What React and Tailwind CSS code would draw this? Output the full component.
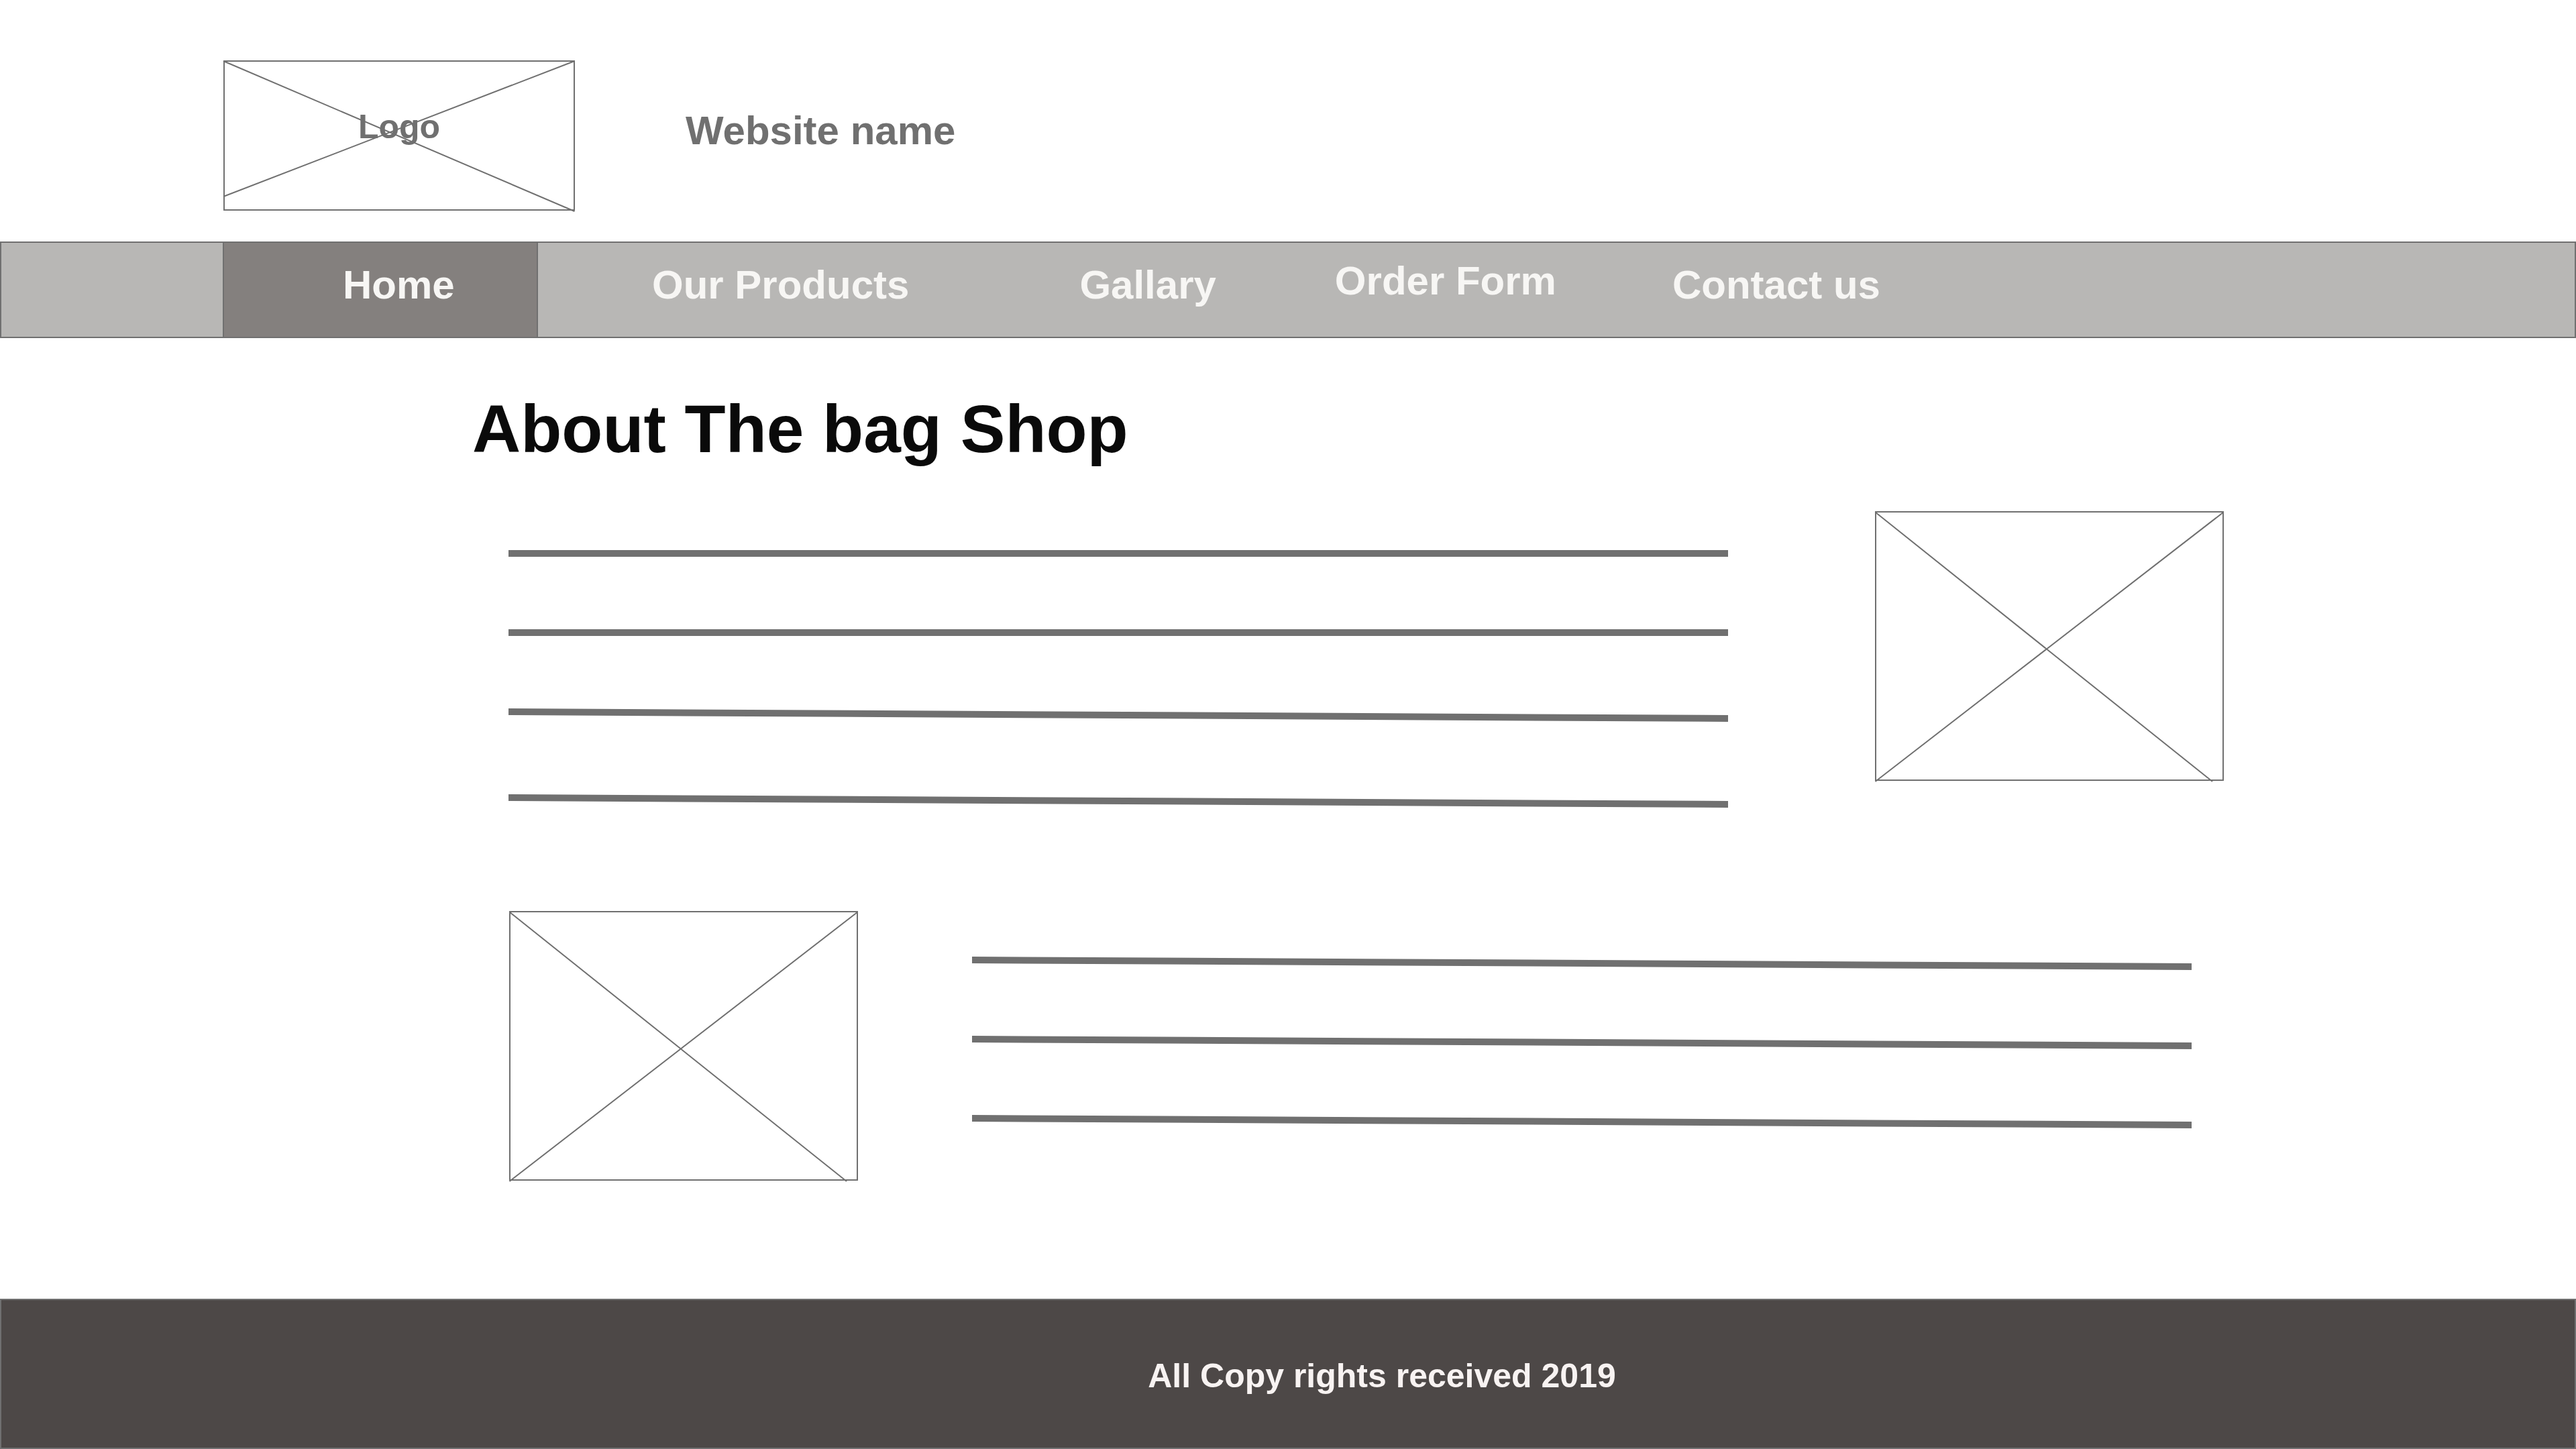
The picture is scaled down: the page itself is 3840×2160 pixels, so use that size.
const navItems = [
  { label: "Our Products", className: "ml-[170px] pt-[33px]" },
  { label: "Gallary", className: "ml-[254px] pt-[33px]" },
  { label: "Order Form", className: "ml-[177px] pt-[27px]" },
  { label: "Contact us", className: "ml-[173px] pt-[33px]" },
];

function Placeholder() {
  return (
    <svg
      role="img"
      aria-label="Image placeholder"
      className="h-[402px] w-[520px] shrink-0 overflow-visible"
      viewBox="0 0 520 402"
      fill="none"
      stroke="#707070"
      strokeWidth="2"
    >
      <rect x="1" y="1" width="518" height="400" />
      <path d="M0.5 1.5L503 403M519.5 1.5L0.5 403" />
    </svg>
  );
}

function TextLine({ slanted }) {
  if (!slanted) return <div className="h-[10px] bg-[#707070]" />;
  return (
    <svg aria-hidden="true" className="block h-5 w-full" viewBox="0 0 1818 20" preserveAspectRatio="none">
      <polygon points="0,0 1818,10 1818,20 0,10" fill="#707070" />
    </svg>
  );
}

export default function App() {
  return (
    <div className="flex min-h-screen flex-col bg-white font-['Liberation_Sans',Arial,sans-serif] font-bold">
      <header className="flex items-start gap-[165px] pt-[90px] pb-[46px] pl-[333px] text-[#707070]">
        <div className="relative h-[224px] w-[524px] shrink-0 pt-[74px] text-center text-[50px] leading-[50px]">
          <svg
            aria-hidden="true"
            className="absolute inset-0 h-full w-full overflow-visible"
            viewBox="0 0 524 224"
            fill="none"
            stroke="#707070"
            strokeWidth="2"
          >
            <rect x="1" y="1" width="522" height="222" />
            <path d="M0 1L523.5 225M0 203L523.5 1" />
          </svg>
          <span className="relative">Logo</span>
        </div>
        <p className="pt-[75px] text-[60px] leading-[60px]">Website name</p>
      </header>

      <nav className="flex h-36 items-stretch border-2 border-[#707070] bg-[#b8b7b5] text-[60px] leading-[60px] whitespace-nowrap text-[#f7f6f4]">
        <a
          href="#home"
          aria-current="page"
          className="ml-[330px] w-[470px] border-x-2 border-[#707070] bg-[#84807e] pt-[33px] pl-[177px]"
        >
          Home
        </a>
        {navItems.map((item) => (
          <a key={item.label} href="#" className={item.className}>
            {item.label}
          </a>
        ))}
      </nav>

      <main className="pb-[176px]">
        <h1 className="pt-[85px] pl-[704px] text-[100px] leading-[100px] text-[#0a0a0a]">About The bag Shop</h1>

        <section className="mt-[73px] flex items-start gap-[219px] pr-[525px] pl-[758px]">
          <div className="flex flex-1 flex-col gap-[108px] pt-[58px]">
            <TextLine />
            <TextLine />
            <TextLine slanted />
            <TextLine slanted />
          </div>
          <Placeholder />
        </section>

        <section className="mt-[154px] flex items-start gap-[170px] pr-[573px] pl-[759px]">
          <Placeholder />
          <div className="flex flex-1 flex-col gap-[98px] pt-[68px]">
            <TextLine slanted />
            <TextLine slanted />
            <TextLine slanted />
          </div>
        </section>
      </main>

      <footer className="mt-auto border-2 border-[#707070] bg-[#4d4847] pt-[88px] pb-[82px] pl-[280px] text-center text-[50px] leading-[50px] text-[#f8f3f2]">
        All Copy rights received 2019
      </footer>
    </div>
  );
}
